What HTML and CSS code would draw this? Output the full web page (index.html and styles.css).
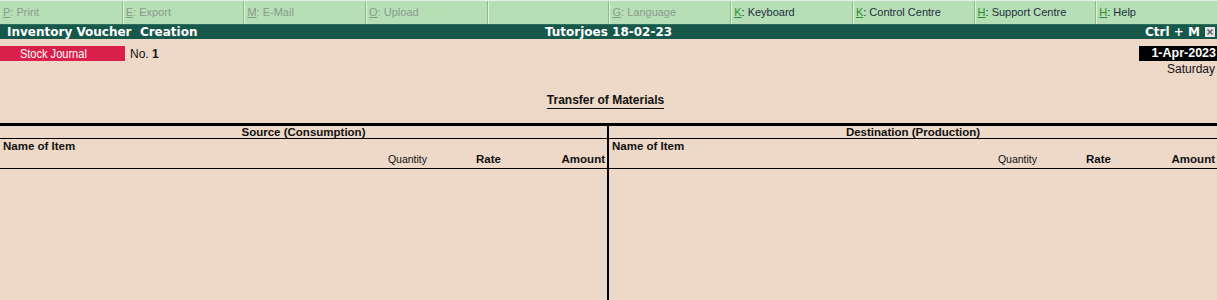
FILE: index.html
```html
<!DOCTYPE html>
<html>
<head>
<meta charset="utf-8">
<link rel="stylesheet" href="styles.css">
</head>
<body>
<div class="screen">
  <div class="toolbar">
    <div class="btn off"><span class="key">P</span>: Print</div>
    <div class="btn off"><span class="key">E</span>: Export</div>
    <div class="btn off"><span class="key">M</span>: E-Mail</div>
    <div class="btn off"><span class="key">O</span>: Upload</div>
    <div class="btn off"></div>
    <div class="btn off"><span class="key">G</span>: Language</div>
    <div class="btn on"><span class="key">K</span>: Keyboard</div>
    <div class="btn on"><span class="key">K</span>: Control Centre</div>
    <div class="btn on"><span class="key">H</span>: Support Centre</div>
    <div class="btn on"><span class="key">H</span>: Help</div>
  </div>
  <div class="titlebar">
    <div class="t-left">Inventory Voucher&nbsp; Creation</div>
    <div class="t-center">Tutorjoes 18-02-23</div>
    <div class="t-right">Ctrl + M <span class="close"><svg width="10" height="10" viewBox="0 0 10 10"><rect x="0" y="0" width="10" height="10" fill="#e4e4e4"/><path d="M2.5 2.5 L7.5 7.5 M7.5 2.5 L2.5 7.5" stroke="#666" stroke-width="1.6"/></svg></span></div>
  </div>
  <div class="vhead">
    <div class="vleft">
      <div class="vtype"><span>Stock Journal</span></div>
      <div class="vno">No. <b>1</b></div>
    </div>
    <div class="vright">
      <div class="vdate">1-Apr-2023</div>
      <div class="vday">Saturday</div>
    </div>
  </div>
  <div class="caption"><span>Transfer of Materials</span></div>
  <div class="table">
    <div class="half left">
      <div class="h-title">Source (Consumption)</div>
      <div class="h-cols">
        <div class="name">Name of Item</div>
        <div class="sub">
          <span></span>
          <span class="qty">Quantity</span>
          <span class="rate">Rate</span>
          <span class="amt">Amount</span>
        </div>
      </div>
      <div class="body"></div>
    </div>
    <div class="half right">
      <div class="h-title">Destination (Production)</div>
      <div class="h-cols">
        <div class="name">Name of Item</div>
        <div class="sub">
          <span></span>
          <span class="qty">Quantity</span>
          <span class="rate">Rate</span>
          <span class="amt">Amount</span>
        </div>
      </div>
      <div class="body"></div>
    </div>
  </div>
</div>
</body>
</html>
```
FILE: styles.css
```css
html, body {
  margin: 0;
  padding: 0;
  background: #eed8c8;
}
.screen {
  width: 1217px;
  height: 300px;
  display: flex;
  flex-direction: column;
  font-family: "Liberation Sans", Arial, sans-serif;
  color: #111;
  overflow: hidden;
}
.toolbar {
  display: grid;
  grid-template-columns: repeat(10, 1fr);
  height: 23px;
  background: #b6dfb6;
  border-top: 1px solid #e4f4e4;
}
.btn {
  border-left: 1px solid #8fb88f;
  box-shadow: inset 1px 0 0 #dff2df;
  font-size: 11px;
  line-height: 22px;
  padding-left: 3px;
  white-space: nowrap;
}
.btn:first-child {
  border-left: none;
  box-shadow: none;
}
.btn.off { color: #8a9a8a; }
.btn.on { color: #1e2e40; }
.key { text-decoration: underline; }
.btn.on .key { color: #2c8c2c; }
.titlebar {
  height: 14px;
  background: #16584a;
  border-top: 1px solid #2d6e5e;
  color: #fff;
  font-family: "DejaVu Sans", Verdana, sans-serif;
  font-weight: bold;
  font-size: 12px;
  line-height: 14px;
  display: grid;
  grid-template-columns: 1fr auto 1fr;
  align-items: center;
}
.t-left { padding-left: 7px; }
.t-center { text-align: center; }
.t-right {
  text-align: right;
  padding-right: 2px;
  display: flex;
  justify-content: flex-end;
  align-items: center;
  gap: 5px;
}
.close { display: flex; }
.vhead {
  display: flex;
  justify-content: space-between;
  align-items: flex-start;
  margin-top: 7px;
}
.vleft {
  display: flex;
  align-items: center;
  gap: 5px;
}
.vtype {
  width: 125px;
  height: 15px;
  background: #d8204a;
  color: #fff;
  font-size: 13px;
  line-height: 15px;
  text-align: center;
  white-space: nowrap;
}
.vtype span {
  display: inline-block;
  transform: scaleX(0.85);
  margin-left: -18px;
}
.vno { font-size: 12px; }
.vright {
  display: flex;
  flex-direction: column;
  align-items: flex-end;
}
.vdate {
  background: #000;
  color: #fff;
  font-weight: bold;
  font-size: 12.5px;
  line-height: 15px;
  height: 15px;
  width: 78px;
  text-align: right;
  padding-right: 1px;
  box-sizing: border-box;
}
.vday {
  font-size: 12px;
  line-height: 13px;
  margin-top: 2px;
  padding-right: 2px;
}
.caption {
  text-align: center;
  font-size: 12px;
  font-weight: bold;
  margin-top: 17px;
  line-height: 14px;
}
.caption span {
  border-bottom: 1px solid #111;
  padding-bottom: 1px;
  margin-left: -6px;
}
.table {
  margin-top: 16px;
  border-top: 3px solid #000;
  display: grid;
  grid-template-columns: 607px 1fr;
  flex: 1;
}
.half {
  display: flex;
  flex-direction: column;
}
.half.right { border-left: 2px solid #000; }
.h-title {
  text-align: center;
  font-weight: bold;
  font-size: 11.5px;
  line-height: 12px;
  height: 12px;
  border-bottom: 1px solid #000;
}
.h-cols {
  height: 29px;
  border-bottom: 1px solid #000;
  font-size: 11.5px;
}
.name {
  font-weight: bold;
  padding-left: 3px;
  line-height: 14px;
}
.sub {
  display: grid;
  grid-template-columns: 1fr 80px 74px 104px;
  padding-right: 2px;
  line-height: 13px;
  text-align: right;
}
.qty { font-size: 10.5px; }
.rate { font-weight: bold; }
.amt { font-weight: bold; }
.body { flex: 1; }
```
